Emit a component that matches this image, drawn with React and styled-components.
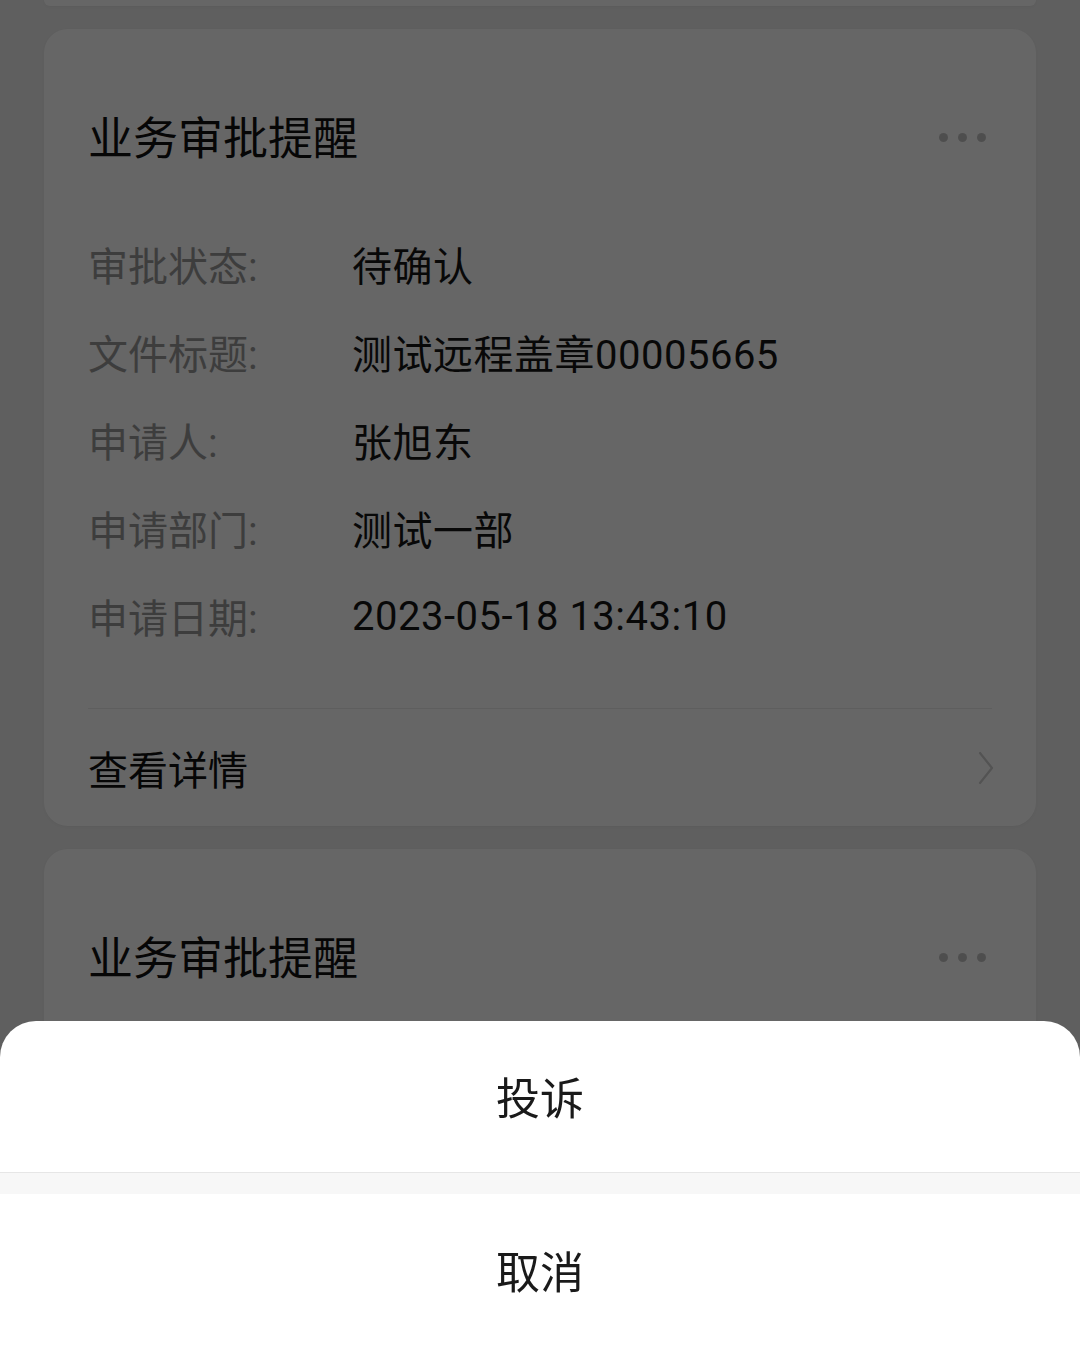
import React from "react";
import styled, { createGlobalStyle } from "styled-components";

const Global = createGlobalStyle`
  html, body { margin: 0; padding: 0; }
  body {
    background: #ededed;
    font-family: Roboto, "Noto Sans CJK SC", "Noto Sans", sans-serif;
    -webkit-font-smoothing: antialiased;
  }
`;

const Page = styled.div`
  width: 1080px;
  height: 1345px;
  overflow: hidden;
  background: #ededed;
  display: flex;
  flex-direction: column;
  align-items: center;
  gap: 23px;
`;

const CardTail = styled.div`
  width: 992px;
  height: 6px;
  flex: none;
  background: #fff;
  border-radius: 0 0 24px 24px;
  box-shadow: 0 1px 3px rgba(0, 0, 0, 0.04);
`;

const Card = styled.section`
  width: 992px;
  flex: none;
  background: #fff;
  border-radius: 24px;
  box-shadow: 0 1px 3px rgba(0, 0, 0, 0.04);
  padding: 0 44px;
  box-sizing: border-box;
`;

const Header = styled.div`
  display: flex;
  align-items: center;
  justify-content: space-between;
  padding-top: 81px;
  height: 60px;
  box-sizing: content-box;
  margin-bottom: 50px;
`;

const Title = styled.h2`
  margin: 0;
  font-size: 45px;
  line-height: 60px;
  font-weight: 400;
  color: #111;
`;

const More = styled.div`
  display: flex;
  gap: 10px;
  margin-right: 6px;
  margin-top: -6px;
`;

const Dot = styled.span`
  width: 9px;
  height: 9px;
  border-radius: 50%;
  background: #c4c4c4;
`;

const Rows = styled.div`
  display: flex;
  flex-direction: column;
  padding-bottom: 48px;
  border-bottom: 1px solid #ebebeb;
`;

const Row = styled.div`
  display: flex;
  align-items: center;
  height: 88px;
  font-size: 40px;
`;

const Label = styled.span`
  width: 264px;
  flex: none;
  color: #9a9a9a;
`;

const Value = styled.span`
  color: #161616;
  letter-spacing: 0.5px;
`;

const Footer = styled.div`
  height: 117px;
  display: flex;
  align-items: center;
  justify-content: space-between;
`;

const FooterText = styled.span`
  font-size: 40px;
  color: #111;
`;

const Overlay = styled.div`
  position: fixed;
  inset: 0;
  background: rgba(0, 0, 0, 0.6);
`;

const Sheet = styled.div`
  position: fixed;
  left: 0;
  right: 0;
  bottom: 0;
  height: 324px;
  background: #fff;
  border-radius: 36px 36px 0 0;
  display: flex;
  flex-direction: column;
  overflow: hidden;
`;

const SheetItem = styled.div`
  height: ${(p) => p.$h}px;
  display: flex;
  align-items: center;
  justify-content: center;
  font-size: 44px;
  color: #1a1a1a;
  border-bottom: ${(p) => (p.$line ? "1px solid #e6e6e6" : "none")};
`;

const SheetGap = styled.div`
  height: 22px;
  background: #f7f7f7;
`;

const Chevron = () => (
  <svg width="18" height="34" viewBox="0 0 18 34" style={{ marginRight: -3 }}>
    <path d="M3 2 L15 17 L3 32" fill="none" stroke="#cfcfcf" strokeWidth="2.2" strokeLinecap="round" strokeLinejoin="round" />
  </svg>
);

const rows = [
  ["审批状态:", "待确认"],
  ["文件标题:", "测试远程盖章00005665"],
  ["申请人:", "张旭东"],
  ["申请部门:", "测试一部"],
  ["申请日期:", "2023-05-18 13:43:10"],
];

const ApprovalCard = () => (
  <Card>
    <Header>
      <Title>业务审批提醒</Title>
      <More>
        <Dot />
        <Dot />
        <Dot />
      </More>
    </Header>
    <Rows>
      {rows.map(([l, v]) => (
        <Row key={l}>
          <Label>{l}</Label>
          <Value>{v}</Value>
        </Row>
      ))}
    </Rows>
    <Footer>
      <FooterText>查看详情</FooterText>
      <Chevron />
    </Footer>
  </Card>
);

export default function App() {
  return (
    <>
      <Global />
      <Page>
        <CardTail />
        <ApprovalCard />
        <ApprovalCard />
      </Page>
      <Overlay />
      <Sheet>
        <SheetItem $h={151} $line>投诉</SheetItem>
        <SheetGap />
        <SheetItem $h={151}>取消</SheetItem>
      </Sheet>
    </>
  );
}
